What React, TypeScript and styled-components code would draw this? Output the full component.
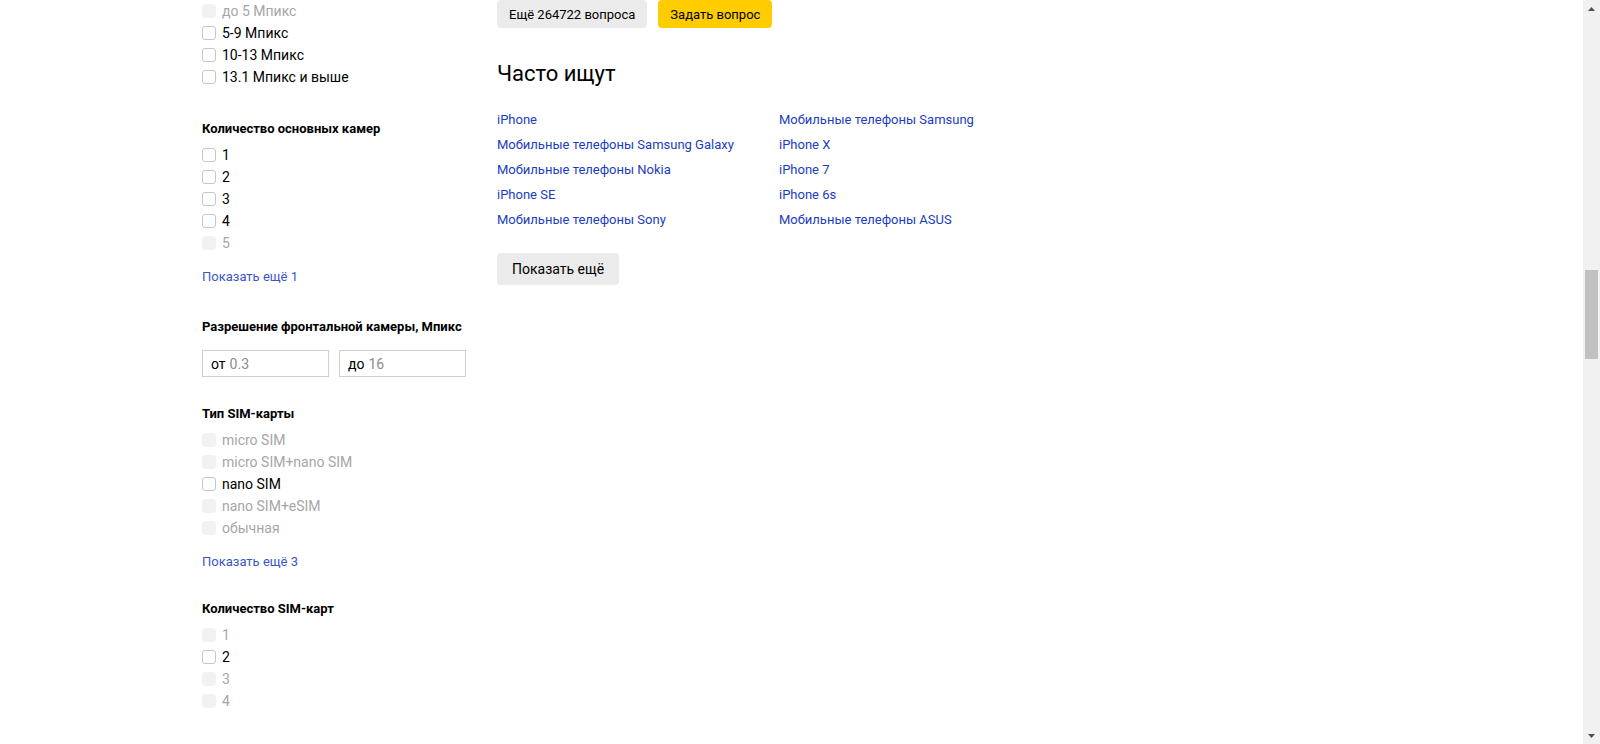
import React from 'react';
import styled, {createGlobalStyle} from 'styled-components';

const GlobalStyle = createGlobalStyle`
  html, body {
    margin: 0;
    padding: 0;
    background: #fff;
    font-family: Roboto, "Liberation Sans", Arial, sans-serif;
    color: #000;
  }
  * {
    box-sizing: border-box;
  }
`

type Option = { label: string; disabled?: boolean }

const megapixels: Option[] = [
    {label: 'до 5 Мпикс', disabled: true},
    {label: '5-9 Мпикс'},
    {label: '10-13 Мпикс'},
    {label: '13.1 Мпикс и выше'},
]
const cameras: Option[] = [
    {label: '1'}, {label: '2'}, {label: '3'}, {label: '4'}, {label: '5', disabled: true},
]
const simTypes: Option[] = [
    {label: 'micro SIM', disabled: true},
    {label: 'micro SIM+nano SIM', disabled: true},
    {label: 'nano SIM'},
    {label: 'nano SIM+eSIM', disabled: true},
    {label: 'обычная', disabled: true},
]
const simCount: Option[] = [
    {label: '1', disabled: true}, {label: '2'}, {label: '3', disabled: true}, {label: '4', disabled: true},
]
const popular = [
    'iPhone',
    'Мобильные телефоны Samsung Galaxy',
    'Мобильные телефоны Nokia',
    'iPhone SE',
    'Мобильные телефоны Sony',
    'Мобильные телефоны Samsung',
    'iPhone X',
    'iPhone 7',
    'iPhone 6s',
    'Мобильные телефоны ASUS',
]

const CheckList = ({items}: { items: Option[] }) => (
    <List>
        {items.map(item => (
            <CheckRow key={item.label} disabled={item.disabled}>
                <Box disabled={item.disabled}/>
                {item.label}
            </CheckRow>
        ))}
    </List>
)

export default function App() {
    return (
        <Screen>
            <GlobalStyle/>
            <Page>
                <Sidebar>
                    <Section>
                        <CheckList items={megapixels}/>
                    </Section>
                    <Section>
                        <FilterTitle>Количество основных камер</FilterTitle>
                        <CheckList items={cameras}/>
                        <MoreLink>Показать ещё 1</MoreLink>
                    </Section>
                    <Section spacing={28}>
                        <FilterTitle>Разрешение фронтальной камеры, Мпикс</FilterTitle>
                        <RangeRow>
                            <RangeInput><span>от</span><Placeholder>0.3</Placeholder></RangeInput>
                            <RangeInput><span>до</span><Placeholder>16</Placeholder></RangeInput>
                        </RangeRow>
                    </Section>
                    <Section spacing={29}>
                        <FilterTitle>Тип SIM-карты</FilterTitle>
                        <CheckList items={simTypes}/>
                        <MoreLink>Показать ещё 3</MoreLink>
                    </Section>
                    <Section>
                        <FilterTitle>Количество SIM-карт</FilterTitle>
                        <CheckList items={simCount}/>
                    </Section>
                </Sidebar>
                <Main>
                    <ButtonRow>
                        <Button>Ещё 264722 вопроса</Button>
                        <Button primary>Задать вопрос</Button>
                    </ButtonRow>
                    <SectionTitle>Часто ищут</SectionTitle>
                    <LinkGrid>
                        {popular.map(link => <PopularLink key={link}>{link}</PopularLink>)}
                    </LinkGrid>
                    <ShowMore>Показать ещё</ShowMore>
                </Main>
            </Page>
            <Scrollbar>
                <ScrollArrow>
                    <svg width="7" height="4" viewBox="0 0 7 4"><path d="M3.5 0L7 4H0z" fill="#505050"/></svg>
                </ScrollArrow>
                <Track>
                    <Thumb/>
                </Track>
                <ScrollArrow>
                    <svg width="7" height="4" viewBox="0 0 7 4"><path d="M0 0h7L3.5 4z" fill="#505050"/></svg>
                </ScrollArrow>
            </Scrollbar>
        </Screen>
    );
}

const Screen = styled.div`
  display: flex;
  height: 100vh;
  overflow: hidden;
`
const Page = styled.div`
  flex: 1;
  display: flex;
  align-items: flex-start;
  padding-left: 202px;
  gap: 30px;
`
const Sidebar = styled.aside`
  width: 265px;
  display: flex;
  flex-direction: column;
`
const Section = styled.div<{ spacing?: number }>`
  display: flex;
  flex-direction: column;
  margin-bottom: ${p => p.spacing ?? 32}px;
`
const FilterTitle = styled.div`
  font-size: 13px;
  font-weight: bold;
  line-height: 18px;
  margin-bottom: 6px;
  white-space: nowrap;
  color: #000;
`
const List = styled.ul`
  list-style: none;
  margin: 0;
  padding: 0;
`
const CheckRow = styled.li<{ disabled?: boolean }>`
  display: flex;
  align-items: center;
  gap: 6px;
  height: 22px;
  font-size: 14px;
  color: ${p => p.disabled ? '#a6a6a6' : '#000'};
`
const Box = styled.span<{ disabled?: boolean }>`
  width: 14px;
  height: 14px;
  border-radius: 3px;
  background: ${p => p.disabled ? '#f2f2f2' : '#fff'};
  border: 1px solid ${p => p.disabled ? '#f2f2f2' : '#c6c6c6'};
`
const MoreLink = styled.a`
  display: block;
  margin-top: 14px;
  font-size: 13px;
  line-height: 18px;
  color: #3b55c9;
  cursor: pointer;
`
const RangeRow = styled.div`
  display: flex;
  gap: 10px;
  margin-top: 8px;
`
const RangeInput = styled.div`
  width: 127px;
  height: 27px;
  border: 1px solid #cfcfcf;
  display: flex;
  align-items: center;
  gap: 4px;
  padding-left: 8px;
  font-size: 14px;
  color: #000;
`
const Placeholder = styled.span`
  color: #8c8c8c;
`
const Main = styled.main`
  display: flex;
  flex-direction: column;
  align-items: flex-start;
`
const ButtonRow = styled.div`
  display: flex;
  gap: 11px;
`
const Button = styled.button<{ primary?: boolean }>`
  height: 28px;
  padding: 0 12px;
  border: none;
  border-radius: 4px;
  font-family: inherit;
  font-size: 13px;
  color: #000;
  background: ${p => p.primary ? '#ffcc00' : '#ebebeb'};
`
const SectionTitle = styled.h2`
  margin: 32px 0 0;
  font-size: 22px;
  font-weight: normal;
  line-height: 28px;
  color: #000;
`
const LinkGrid = styled.div`
  display: grid;
  grid-template-columns: 282px auto;
  grid-template-rows: repeat(5, 20px);
  grid-auto-flow: column;
  row-gap: 5px;
  margin-top: 22px;
`
const PopularLink = styled.a`
  font-size: 13px;
  line-height: 20px;
  color: #1a3dc1;
  cursor: pointer;
`
const ShowMore = styled.button`
  margin-top: 23px;
  height: 32px;
  padding: 0 15px;
  border: none;
  border-radius: 4px;
  background: #ebebeb;
  font-family: inherit;
  font-size: 14px;
  color: #000;
`
const Scrollbar = styled.div`
  width: 17px;
  display: flex;
  flex-direction: column;
  background: #f1f1f1;
`
const ScrollArrow = styled.div`
  height: 17px;
  display: flex;
  align-items: center;
  justify-content: center;
`
const Track = styled.div`
  flex: 1;
  padding: 253px 2px 0;
`
const Thumb = styled.div`
  height: 89px;
  background: #c1c1c1;
`
